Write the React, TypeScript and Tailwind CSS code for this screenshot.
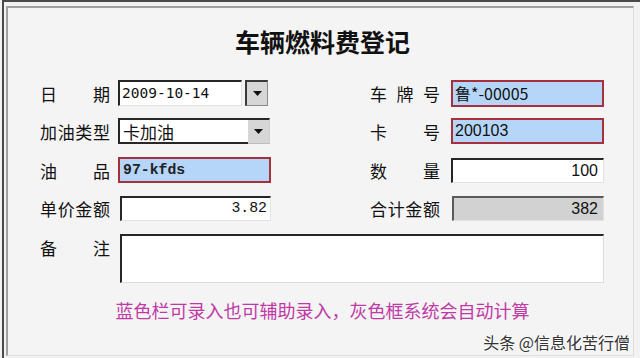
import React from "react";

const cjk = { fontFamily: '"Noto Sans CJK SC", "Noto Sans", sans-serif' };

function Label({ chars }: { chars: string[] }) {
  return (
    <div
      className="w-[70px] h-[26px] flex items-center justify-between text-[17px] text-[#111] leading-none"
      style={cjk}
    >
      {chars.map((c, i) => (
        <span key={i}>{c}</span>
      ))}
    </div>
  );
}

function Arrow() {
  return (
    <svg width="9" height="5" viewBox="0 0 9 5">
      <polygon points="0,0 9,0 4.5,5" fill="#111" />
    </svg>
  );
}

export default function App() {
  return (
    <div className="w-[640px] h-[358px] bg-[#f2f2f2] pl-[2px] overflow-hidden relative">
      <div className="h-full border-l-2 border-t-2 border-[#4a4a4a] pl-[2px] pt-[4px] pr-[6px] pb-[2px]">
        <div className="h-full border-t-2 border-l-2 border-[#a0a0a0] border-r border-b border-r-[#dedede] border-b-[#dedede] bg-[#f4f4f4]">
          <div
            className="mt-[18px] h-[30px] flex items-center justify-center text-[25px] font-bold text-[#111] leading-none pl-[4px]"
            style={cjk}
          >
            车辆燃料费登记
          </div>

          {/* Row 1 */}
          <div className="mt-[24px] flex items-center pl-[32px] h-[26px]">
            <Label chars={["日", "期"]} />
            <div className="ml-[8px] w-[152px] flex">
              <div
                className="w-[124px] h-[26px] bg-white border-t-2 border-l-2 border-[#262626] border-r border-b border-r-[#e2e2e2] border-b-[#e2e2e2] flex items-center pl-[2px] text-[14.5px] text-[#111]"
                style={{ fontFamily: '"DejaVu Sans Mono", monospace' }}
              >
                2009-10-14
              </div>
              <div className="ml-[3px] w-[23px] h-[26px] bg-[#d6d6d6] border-t-2 border-l-2 border-[#3a3a3a] border-r border-b border-r-[#8a8a8a] border-b-[#8a8a8a] flex items-center justify-center">
                <Arrow />
              </div>
            </div>
            <div className="ml-[100px]">
              <Label chars={["车", "牌", "号"]} />
            </div>
            <div
              className="ml-[11px] w-[153px] h-[27px] bg-[#b5d6f8] border-2 border-[#a8303c] flex items-center pl-[2px] text-[16px] text-[#111]"
              style={cjk}
            >
              鲁*-00005
            </div>
          </div>

          {/* Row 2 */}
          <div className="mt-[12px] flex items-center pl-[32px] h-[26px]">
            <Label chars={["加", "油", "类", "型"]} />
            <div className="ml-[8px] w-[152px] h-[26px] flex">
              <div
                className="flex-1 h-full bg-white border-t-2 border-l-2 border-b-2 border-[#262626] flex items-center pl-[3px] text-[17px] text-[#111] leading-none"
                style={cjk}
              >
                卡加油
              </div>
              <div className="w-[22px] h-full bg-[#d6d6d6] border-t-2 border-[#262626] border-r border-r-[#cfcfcf] border-b border-b-[#bdbdbd] flex items-center justify-center">
                <Arrow />
              </div>
            </div>
            <div className="ml-[100px]">
              <Label chars={["卡", "号"]} />
            </div>
            <div
              className="ml-[11px] w-[153px] h-[26px] bg-[#b5d6f8] border-2 border-[#a8303c] flex items-center pl-[2px] text-[16px] text-[#111]"
              style={{ fontFamily: '"Liberation Sans", Arial, sans-serif' }}
            >
              200103
            </div>
          </div>

          {/* Row 3 */}
          <div className="mt-[13px] flex items-center pl-[32px] h-[26px]">
            <Label chars={["油", "品"]} />
            <div
              className="ml-[8px] w-[153px] h-[26px] bg-[#b5d6f8] border-2 border-[#a8303c] flex items-center pl-[3px] text-[14.8px] font-bold text-[#222]"
              style={{ fontFamily: '"Liberation Mono", "Courier New", monospace' }}
            >
              97-kfds
            </div>
            <div className="ml-[99px]">
              <Label chars={["数", "量"]} />
            </div>
            <div
              className="ml-[11px] w-[153px] h-[25px] bg-white border-t-2 border-l-2 border-[#262626] border-r border-b border-r-[#e2e2e2] border-b-[#e2e2e2] flex items-center justify-end pr-[5px] text-[16px] text-[#111]"
              style={{ fontFamily: '"Liberation Sans", Arial, sans-serif' }}
            >
              100
            </div>
          </div>

          {/* Row 4 */}
          <div className="mt-[12px] flex items-center pl-[32px] h-[26px]">
            <Label chars={["单", "价", "金", "额"]} />
            <div
              className="ml-[10px] w-[151px] h-[25px] bg-white border-t-2 border-l-2 border-[#262626] border-r border-b border-r-[#e2e2e2] border-b-[#e2e2e2] flex items-center justify-end pr-[3px] text-[14.8px] text-[#111]"
              style={{ fontFamily: '"Liberation Mono", "Courier New", monospace' }}
            >
              3.82
            </div>
            <div className="ml-[99px]">
              <Label chars={["合", "计", "金", "额"]} />
            </div>
            <div
              className="ml-[12px] w-[152px] h-[25px] bg-[#d2d2d2] border-t-2 border-l-2 border-[#5a5a5a] border-r border-b border-r-[#e2e2e2] border-b-[#e2e2e2] flex items-center justify-end pr-[5px] text-[16px] text-[#111]"
              style={{ fontFamily: '"Liberation Sans", Arial, sans-serif' }}
            >
              382
            </div>
          </div>

          {/* Row 5 */}
          <div className="mt-[13px] flex items-start pl-[32px]">
            <Label chars={["备", "注"]} />
            <div className="ml-[10px] w-[484px] h-[49px] bg-white border-t-2 border-l-2 border-[#262626] border-r border-b border-r-[#dcdcdc] border-b-[#dcdcdc]" />
          </div>

          <div
            className="mt-[15px] h-[24px] flex items-center justify-center text-[18px] text-[#c03aa6] leading-none pl-[4px]"
            style={cjk}
          >
            蓝色栏可录入也可辅助录入，灰色框系统会自动计算
          </div>
        </div>
      </div>

      <div
        className="absolute right-[10px] top-[332px] text-[16px] text-[#333] leading-[20px]"
        style={{ ...cjk, textShadow: "0 0 2px #fff, 0 0 2px #fff" }}
      >
        头条 @信息化苦行僧
      </div>
    </div>
  );
}
